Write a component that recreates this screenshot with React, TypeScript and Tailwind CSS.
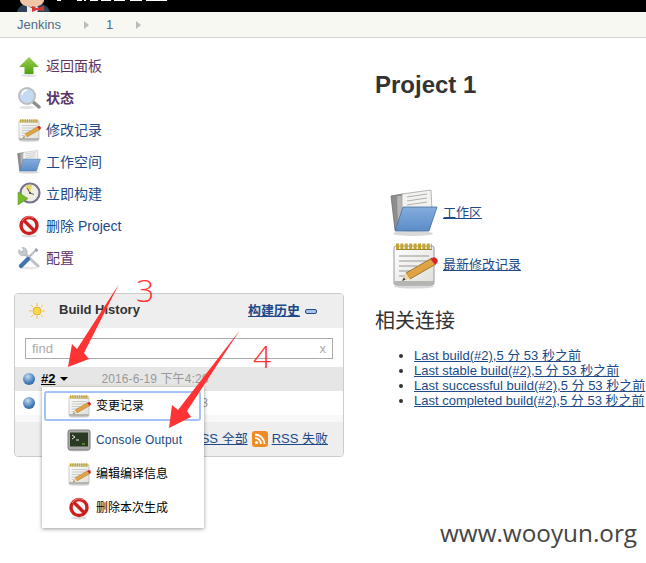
import React from "react";

const CJK = "font-['Liberation_Sans','Noto_Sans_CJK_SC',sans-serif]";

function Notepad({ size = 24 }: { size?: number }) {
  return (
    <svg width={size} height={size} viewBox="0 0 48 48">
      <defs>
        <linearGradient id="padBody" x1="0" y1="0" x2="1" y2="1">
          <stop offset="0" stopColor="#ffffff" />
          <stop offset="1" stopColor="#dededa" />
        </linearGradient>
      </defs>
      <ellipse cx="24" cy="45.5" rx="20" ry="2" fill="#d8d8d8" />
      <rect x="4" y="5" width="40" height="39" rx="2" fill="url(#padBody)" stroke="#9a9a9a" />
      <rect x="4.5" y="40" width="39" height="4" fill="#b4b4b0" />
      <path d="M6 5.5h36" stroke="#c4a52e" strokeWidth="6" strokeDasharray="3 1.4" />
      <path d="M6 8.5h36" stroke="#a08828" strokeWidth="1" />
      <path d="M9 15h30M9 20h30M9 25h18M9 30h12M9 35h8" stroke="#b5b5b5" strokeWidth="1.3" />
      <path d="M16 32L42 17l4 6-26 15z" fill="#e2a344" stroke="#8a6420" strokeWidth=".8" />
      <path d="M40.5 18l1.5-1a3 3 0 0 1 4 6l-1 .7z" fill="#d9262c" />
      <path d="M16 32l4 6-8 2z" fill="#f0d6a8" />
      <path d="M14 36.5l1.4 2.2-3.4 1.3z" fill="#333" />
    </svg>
  );
}

function Folder({ size = 24 }: { size?: number }) {
  return (
    <svg width={size} height={size} viewBox="0 0 48 48">
      <defs>
        <linearGradient id="folderBlue" x1="0" y1="0" x2="0" y2="1">
          <stop offset="0" stopColor="#85addf" />
          <stop offset="1" stopColor="#5c8cc6" />
        </linearGradient>
      </defs>
      <ellipse cx="23" cy="44.5" rx="20" ry="2.5" fill="#d8d8d8" />
      <path d="M1 7l12-2 1 36H5z" fill="#8d8d8d" stroke="#6e6e6e" strokeWidth=".8" />
      <path d="M7 7h7v30H8z" fill="#b5b5b5" />
      <path d="M12 5L41 1l1 20-30 12z" fill="#f2f2f0" stroke="#a5a5a5" strokeWidth=".8" />
      <path d="M17 8l20-3M17 12l20-3M17 16l20-3" stroke="#b0b0b0" />
      <path d="M13 18h34l-8 24H5z" fill="url(#folderBlue)" stroke="#41709f" strokeWidth=".8" />
    </svg>
  );
}

function Magnifier({ size = 24 }: { size?: number }) {
  return (
    <svg width={size} height={size} viewBox="0 0 24 24">
      <ellipse cx="10" cy="21.5" rx="8" ry="1.5" fill="#e2e2e2" />
      <path d="M15 15l7 6" stroke="#8d8d8d" strokeWidth="3.4" strokeLinecap="round" />
      <circle cx="10" cy="10" r="8" fill="#c4daf3" stroke="#bdbdbd" strokeWidth="2" />
      <path d="M5 9a5 5 0 0 1 5-5" stroke="#fff" strokeWidth="1.6" fill="none" />
    </svg>
  );
}

function ClockBuild({ size = 24 }: { size?: number }) {
  return (
    <svg width={size} height={size} viewBox="0 0 24 24">
      <circle cx="13" cy="11" r="9.5" fill="#f0ede2" stroke="#77738f" strokeWidth="2.2" />
      <path d="M13 11L8 4.5A8 8 0 0 1 15 3z" fill="#e6d667" />
      <path d="M13 11l4 1.5M13 11l-3-5" stroke="#555" strokeWidth=".9" />
      <circle cx="13" cy="11" r="1" fill="#444" />
      <path d="M1 10l10 6.5L1 23z" fill="#76b82a" stroke="#5b9a1c" strokeWidth=".5" />
    </svg>
  );
}

function NoEntry({ size = 24 }: { size?: number }) {
  return (
    <svg width={size} height={size} viewBox="0 0 24 24">
      <ellipse cx="12" cy="22" rx="8" ry="1.4" fill="#ddd" />
      <circle cx="12" cy="11.5" r="8" fill="#f6f6f6" stroke="#cc1f1f" strokeWidth="3.4" />
      <path d="M6.5 6l11 11" stroke="#cc1f1f" strokeWidth="3.4" />
      <path d="M5 7a8.5 8.5 0 0 1 12-3" stroke="#ee8a8a" strokeWidth="1" fill="none" />
    </svg>
  );
}

function Tools({ size = 24 }: { size?: number }) {
  return (
    <svg width={size} height={size} viewBox="0 0 24 24">
      <ellipse cx="12" cy="22" rx="9" ry="1.3" fill="#e6e6e6" />
      <path d="M6 6l15 14" stroke="#bcc2c7" strokeWidth="3" strokeLinecap="round" />
      <path d="M2 3.5A4.5 4.5 0 0 0 8 9.5L10 7.5A4.5 4.5 0 0 0 5 1.5L7 4.5 4.5 6z" fill="#c5cace" stroke="#9aa0a5" strokeWidth=".5" />
      <path d="M12 11l8-8" stroke="#b6bcc1" strokeWidth="2" />
      <path d="M19 2l2.5 2.5-2 1.5-2-2z" fill="#9aa0a5" />
      <path d="M4 20l7-7" stroke="#3f74ac" strokeWidth="4.2" strokeLinecap="round" />
    </svg>
  );
}

function Terminal({ size = 24 }: { size?: number }) {
  return (
    <svg width={size} height={size} viewBox="0 0 24 24">
      <ellipse cx="12" cy="22.5" rx="10" ry="1" fill="#ddd" />
      <rect x="1" y="2" width="22" height="20" rx="2" fill="#a8aaa6" stroke="#7d7d7d" />
      <rect x="3" y="4.5" width="18" height="14" fill="#2a3a22" />
      <path d="M5 7l3 2-3 2M9 12h3" stroke="#e4e4e4" fill="none" />
      <path d="M15 16h3" stroke="#8cc63f" />
    </svg>
  );
}

function BlueBall() {
  return <span className="block h-3 w-3 rounded-full bg-[radial-gradient(circle_at_40%_30%,#c6daf0,#4a80bb_55%,#1f4a7d)]" />;
}

function TaskLink({ icon, label, visited, bold }: { icon: React.ReactNode; label: string; visited?: boolean; bold?: boolean }) {
  return (
    <div className="flex h-8 items-center gap-[5px] pl-[3px]">
      <span className="flex h-6 w-6 items-center justify-center">{icon}</span>
      <span className={`text-sm ${visited ? "text-[#5c3566]" : "text-[#204a87]"} ${bold ? "font-bold" : ""}`}>{label}</span>
    </div>
  );
}

function MenuRow({ icon, label, blue, active }: { icon: React.ReactNode; label: string; blue?: boolean; active?: boolean }) {
  return (
    <div className={`flex h-[30px] items-center gap-[5px] rounded-[3px] border-2 pl-[21px] ${active ? "border-[#a3c3f7]" : "border-transparent"}`}>
      <span className="flex h-6 w-6 items-center justify-center">{icon}</span>
      <span className={`text-xs ${blue ? "tracking-[0.2px] text-[#204a87]" : "text-black"}`}>{label}</span>
    </div>
  );
}

export default function App() {
  const links = [
    "Last build(#2),5 分 53 秒之前",
    "Last stable build(#2),5 分 53 秒之前",
    "Last successful build(#2),5 分 53 秒之前",
    "Last completed build(#2),5 分 53 秒之前",
  ];

  return (
    <div className={`relative h-[563px] w-[646px] overflow-hidden bg-white text-[13px] text-[#333] ${CJK}`}>
      {/* header, only the bottom of the logo is in frame */}
      <div className="h-3 bg-black">
        <svg width="170" height="12" viewBox="0 0 170 12" className="block">
          <path d="M17 12c1-4 4-7 8-8h16c5 1 8 4 9 8z" fill="#2f4258" />
          <path d="M20 0h24c0 4-5 7-12 7S20 4 20 0z" fill="#f0c6a6" />
          <path d="M27 6l5 2 5-2 2 3-2 3h-10z" fill="#eeeeee" />
          <path d="M32 6l5 2 7-2v5l-7-1-5 2z" fill="#d33833" />
          <path d="M57 0h4v1h-4zM77 0h5v1h-5zM84 0h2v1h-2zM90 0h8v1h-8zM101 0h10v1h-10zM114 0h11v1h-11zM130 0h12v1h-12zM146 0h21v1h-21z" fill="#fff" />
        </svg>
      </div>
      <div className="flex h-[26px] items-center border-b border-[#d3d3d3] bg-[#f6f8f1] pl-[17px] text-[#4f6b8a]">
        <span>Jenkins</span>
        <span className="ml-[23px] h-0 w-0 border-y-4 border-l-[5px] border-y-transparent border-l-[#bbb]" />
        <span className="ml-[17px]">1</span>
        <span className="ml-[23px] h-0 w-0 border-y-4 border-l-[5px] border-y-transparent border-l-[#bbb]" />
      </div>

      <div className="flex">
        {/* side panel */}
        <div className="w-[375px] shrink-0 pl-[14px] pt-3">
          <TaskLink
            icon={
              <svg width="24" height="24" viewBox="0 0 24 24">
                <defs>
                  <linearGradient id="upGreen" x1="0" y1="0" x2="0" y2="1">
                    <stop offset="0" stopColor="#9ad04c" />
                    <stop offset="1" stopColor="#4fa010" />
                  </linearGradient>
                </defs>
                <ellipse cx="12" cy="21.5" rx="8" ry="1.5" fill="#e2e2e2" />
                <path d="M12 3l10 10h-5.5v7h-9v-7H2z" fill="url(#upGreen)" />
              </svg>
            }
            label="返回面板"
            visited
          />
          <TaskLink icon={<Magnifier />} label="状态" visited bold />
          <TaskLink icon={<Notepad />} label="修改记录" />
          <TaskLink icon={<Folder />} label="工作空间" />
          <TaskLink icon={<ClockBuild />} label="立即构建" />
          <TaskLink icon={<NoEntry />} label="删除 Project" />
          <TaskLink icon={<Tools />} label="配置" visited />

          {/* build history */}
          <div className="mt-[19px] w-[330px] overflow-hidden rounded-[4px] border border-[#ccc]">
            <div className="flex h-[34px] items-center bg-[#eee] pl-[14px] pr-[26px]">
              <svg width="16" height="16" viewBox="0 0 16 16">
                <circle cx="8" cy="8" r="4" fill="#f6d84a" stroke="#e8b030" />
                <path d="M8 0v3M8 13v3M0 8h3M13 8h3M2 2l2 2M12 12l2 2M14 2l-2 2M4 12l-2 2" stroke="#f2c050" />
              </svg>
              <span className="ml-[14px] pb-0.5 font-bold text-[#333]">Build History</span>
              <span className="ml-auto font-bold text-[#204a87] underline">构建历史</span>
              <span className="ml-[5px] h-[5px] w-3 rounded-[2px] border border-[#204a87] bg-[#a9c4e4]" />
            </div>
            <div className="bg-white px-[10px] pb-2 pt-[10px]">
              <div className="flex h-[21px] items-center justify-between border border-[#aaa] px-[6px] text-[#aaa]">
                <span>find</span>
                <span>x</span>
              </div>
            </div>
            <div className="flex h-6 items-center bg-[#e6e6e6] pl-2">
              <BlueBall />
              <span className="ml-[6px] font-bold text-black underline">#2</span>
              <span className="ml-[5px] h-0 w-0 border-x-4 border-t-4 border-x-transparent border-t-black" />
              <span className="ml-[33px] text-xs tracking-[0.1px] text-[#999]">2016-6-19 下午4:28</span>
            </div>
            <div className="flex h-[24px] items-center bg-white pl-2">
              <BlueBall />
              <span className="ml-[66px] text-xs tracking-[0.1px] text-[#999]">2016-6-19 下午4:23</span>
            </div>
            <div className="h-[7px] bg-[#f8f8f8]" />
            <div className="flex h-[34px] items-center justify-end gap-1 bg-[#eee] pr-[15px] text-[#204a87]">
              <span className="underline">RSS 全部</span>
              <svg width="16" height="16" viewBox="0 0 16 16" className="shrink-0">
                <rect width="16" height="16" rx="3" fill="#f08a24" />
                <circle cx="4.5" cy="11.5" r="1.6" fill="#fff" />
                <path d="M3 7a6 6 0 0 1 6 6M3 3.5a9.5 9.5 0 0 1 9.5 9.5" stroke="#fff" strokeWidth="1.8" fill="none" />
              </svg>
              <span className="underline">RSS 失败</span>
            </div>
          </div>
        </div>

        {/* main panel */}
        <div className="min-w-0 flex-1">
          <h1 className="mt-[32px] text-2xl font-bold leading-[30px] text-[#333]">Project 1</h1>
          <div className="mt-[87px] flex h-[52px] items-center gap-[5px] pl-[15px]">
            <Folder size={48} />
            <span className="text-[#204a87] underline">工作区</span>
          </div>
          <div className="flex h-[52px] items-center gap-[5px] pl-[15px]">
            <Notepad size={48} />
            <span className="text-[#204a87] underline">最新修改记录</span>
          </div>
          <h2 className="mt-[16px] text-xl leading-7 text-[#333]">相关连接</h2>
          <ul className="mt-[13px] list-disc whitespace-nowrap pl-[39px] leading-[15px] text-[#204a87]">
            {links.map((link) => (
              <li key={link} className="underline marker:text-[#333]">{link}</li>
            ))}
          </ul>
        </div>
      </div>

      {/* build context menu */}
      <div className="absolute left-[42px] top-[387px] h-[141px] w-[162px] bg-white shadow-[0_1px_4px_rgba(0,0,0,0.4)]">
        <div className="flex flex-col gap-1 pl-[2px] pr-[3px] pt-[4px]">
          <MenuRow icon={<Notepad />} label="变更记录" active />
          <MenuRow icon={<Terminal />} label="Console Output" blue />
          <MenuRow icon={<Notepad />} label="编辑编译信息" />
          <MenuRow icon={<NoEntry />} label="删除本次生成" />
        </div>
      </div>

      {/* annotation arrows */}
      <svg className="absolute left-0 top-0" width="646" height="563" viewBox="0 0 646 563">
        <path d="M119 284L84 353l5 6-21 8 4-23 5 5z" fill="#f33" />
        <path d="M240 330L187 411l4 6-22 11 3-23 6 5z" fill="#f33" />
      </svg>
      <span className="absolute left-[136px] top-[272px] font-['Open_Sans',sans-serif] text-[32px] font-light leading-9 text-[#f33]">3</span>
      <span className="absolute left-[253px] top-[338px] font-['Open_Sans',sans-serif] text-[32px] font-light leading-9 text-[#f33]">4</span>
      <span className="absolute left-[440px] top-[517px] font-['Open_Sans',sans-serif] text-[24.3px] leading-8 text-[#444]">www.wooyun.org</span>
    </div>
  );
}
